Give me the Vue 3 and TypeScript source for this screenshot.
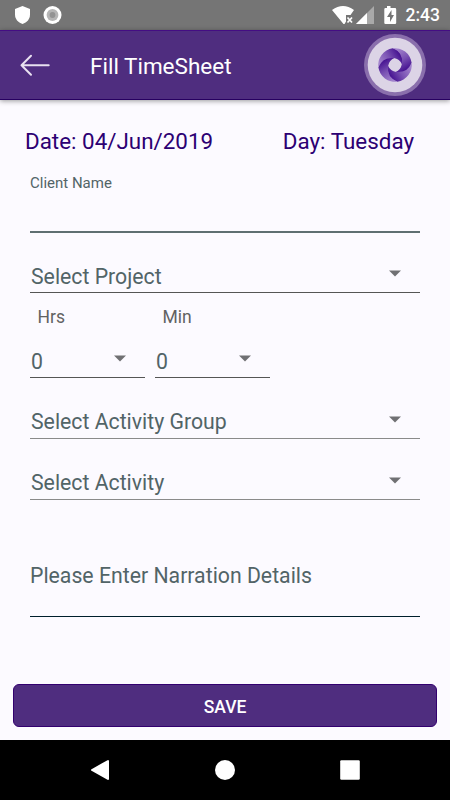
<script setup lang="ts">
import { ref } from 'vue'

const date = ref('04/Jun/2019')
const day = ref('Tuesday')
const durations = [
  { label: 'Hrs', value: '0' },
  { label: 'Min', value: '0' },
]
const activities = ['Select Activity Group', 'Select Activity']
const blades = [-8, 82, 172, 262]
</script>

<template>
  <div class="screen">
    <div class="status">
      <svg class="status-left" viewBox="0 0 70 30">
        <path d="M22.5 6 L30 9 V14.500 C30 19 27 22.500 22.500 24 C18 22.500 15 19 15 14.500 V9Z" fill="#fff" />
        <circle cx="52.500" cy="15" r="9" fill="#fff" />
        <circle cx="52.500" cy="15" r="5.900" fill="#b5b5b5" />
        <circle cx="52.500" cy="15" r="2.900" fill="#939393" />
      </svg>
      <div class="status-right">
        <svg class="signals" viewBox="0 0 70 30">
          <path d="M2 10 Q13 2 24 10 L20.500 15 H16 V21.500 L14.500 24 H13.500Z" fill="#fff" />
          <path d="M17.500 17.500 L22 22.500 M22 17.500 L17.500 22.500" stroke="#fff" stroke-width="1.700" />
          <path d="M44 6 V24 H26Z" fill="#a9a9a9" />
          <path d="M37 13 V24 H26Z" fill="#fff" />
          <path d="M57 6 H60.500 V8 H65 Q66.200 8 66.200 9.200 V23 Q66.200 24 65 24 H55.500 Q54.300 24 54.300 23 V9.200 Q54.300 8 55.500 8 H57Z" fill="#fff" />
          <path d="M61.500 10 L57 17 H60 V22 L64 15 H61.500Z" fill="#757575" />
        </svg>
        <span class="clock">2:43</span>
      </div>
    </div>

    <header class="appbar">
      <svg class="back" viewBox="0 0 32 24">
        <path d="M29.700 12.300 H2.500 M12 2.800 L2.500 12.300 L12 21.800" fill="none" stroke="#e8e0f0" stroke-width="2" stroke-linecap="round" stroke-linejoin="round" />
      </svg>
      <h1 class="title">Fill TimeSheet</h1>
      <svg class="logo" viewBox="-32 -32 64 64">
        <defs>
          <linearGradient id="blade" gradientUnits="userSpaceOnUse" x1="1" y1="-14" x2="10" y2="7">
            <stop offset="0" stop-color="#a384cd" />
            <stop offset="0.500" stop-color="#7a52b3" />
            <stop offset="1" stop-color="#430f8f" />
          </linearGradient>
        </defs>
        <circle r="31" fill="#8a6fac" />
        <circle r="27.300" fill="#dcd4e6" />
        <circle r="11.500" fill="none" stroke="#6b3fa9" stroke-width="9" />
        <path
          v-for="angle in blades"
          :key="angle"
          :transform="`rotate(${angle})`"
          d="M0 -16.800 A16.800 16.800 0 0 1 16.800 0 Q11 10 0 7 Q5.200 5.200 7 0 Q10 -11 0 -16.800Z"
          fill="url(#blade)"
        />
      </svg>
    </header>

    <main class="form">
      <div class="heading">
        <span>Date: {{ date }}</span>
        <span>Day: {{ day }}</span>
      </div>

      <div class="client">Client Name</div>

      <div class="select project">
        <span>Select Project</span>
        <svg class="caret" viewBox="0 0 12 7"><path d="M0 .5 H12 L6 6.500Z" /></svg>
      </div>

      <div class="durations">
        <div v-for="item in durations" :key="item.label" class="duration">
          <div class="duration-label">{{ item.label }}</div>
          <div class="select short">
            <span>{{ item.value }}</span>
            <svg class="caret" viewBox="0 0 12 7"><path d="M0 .5 H12 L6 6.500Z" /></svg>
          </div>
        </div>
      </div>

      <div v-for="name in activities" :key="name" class="select activity">
        <span>{{ name }}</span>
        <svg class="caret" viewBox="0 0 12 7"><path d="M0 .5 H12 L6 6.500Z" /></svg>
      </div>

      <div class="narration">Please Enter Narration Details</div>
      <button class="save" type="button">SAVE</button>
    </main>

    <nav class="navbar">
      <svg viewBox="0 0 450 60">
        <path d="M92 30 L108 21 V39Z" fill="#fff" stroke="#fff" stroke-width="2" stroke-linejoin="round" />
        <circle cx="225" cy="30" r="10" fill="#fff" />
        <rect x="340.200" y="20.200" width="19.600" height="19.600" rx="1.200" fill="#fff" />
      </svg>
    </nav>
  </div>
</template>

<style>
body {
  margin: 0;
}
</style>

<style scoped>
.screen {
  width: 450px;
  height: 800px;
  display: flex;
  flex-direction: column;
  overflow: hidden;
  background: #fcfaff;
  font-family: Roboto, sans-serif;
  font-size: 21.25px;
  color: #526467;
}
.status {
  height: 30px;
  display: flex;
  justify-content: space-between;
  background: #757575;
}
.status-left,
.signals {
  width: 70px;
  height: 30px;
}
.status-right {
  display: flex;
  padding-right: 10px;
}
.clock {
  width: 40px;
  font-size: 17.5px;
  font-weight: 500;
  line-height: 31px;
  color: #fff;
  white-space: nowrap;
  text-align: right;
}
.appbar {
  box-sizing: border-box;
  height: 70px;
  flex: none;
  display: flex;
  align-items: center;
  padding: 0 23px 0 19px;
  background: #4f2d7f;
  border-top: 1px solid #440d83;
  border-bottom: 1px solid #270060;
  box-shadow: 0 1px 5px rgba(0, 0, 0, 0.4);
}
.back {
  width: 32px;
  height: 24px;
}
.title {
  margin: 1px 0 0 39px;
  font-size: 22.5px;
  font-weight: 400;
  color: #fff;
}
.logo {
  width: 64px;
  height: 64px;
  margin-left: auto;
}
.form {
  height: 640px;
  box-sizing: border-box;
  padding: 0 30px;
  display: flex;
  flex-direction: column;
}
.heading {
  display: flex;
  justify-content: space-between;
  height: 29px;
  margin: 27px 6px 0 -5px;
  font-size: 22.4px;
  line-height: 28px;
  color: #2c0073;
}
.client {
  height: 57px;
  padding-top: 18px;
  font-size: 15px;
  line-height: 18px;
  border-bottom: 2px solid #5f6f71;
}
.select {
  box-sizing: border-box;
  display: flex;
  justify-content: space-between;
  padding: 0 19px 0 1px;
  line-height: 28px;
  border-bottom: 1px solid #555;
}
.caret {
  width: 12px;
  height: 7px;
  margin-top: 8px;
  fill: #707073;
}
.project {
  height: 60px;
  padding-top: 30px;
}
.durations {
  display: flex;
  gap: 10px;
}
.duration {
  width: 115px;
}
.duration-label {
  height: 23px;
  padding: 12px 0 0 7.5px;
  font-size: 17.5px;
  line-height: 24px;
  color: #626262;
}
.short {
  height: 50px;
  padding-top: 20px;
}
.project .caret,
.short .caret {
  margin-top: 7px;
}
.activity {
  height: 61px;
  padding-top: 30px;
  border-color: #8a8a8a;
}
.activity .caret {
  margin-top: 7.5px;
}
.narration {
  height: 54px;
  margin-top: 62px;
  line-height: 28px;
  border-bottom: 1px solid #001f2c;
}
.save {
  box-sizing: border-box;
  height: 43px;
  margin: auto -17px 13px;
  padding: 2px 0 0;
  border: 1px solid #33006f;
  border-radius: 6px;
  background: #4f2d7f;
  font-family: Roboto, sans-serif;
  font-size: 17.5px;
  font-weight: 500;
  color: #fff;
}
.navbar {
  height: 60px;
  background: #000;
}
.navbar svg {
  display: block;
  width: 450px;
  height: 60px;
}
</style>
